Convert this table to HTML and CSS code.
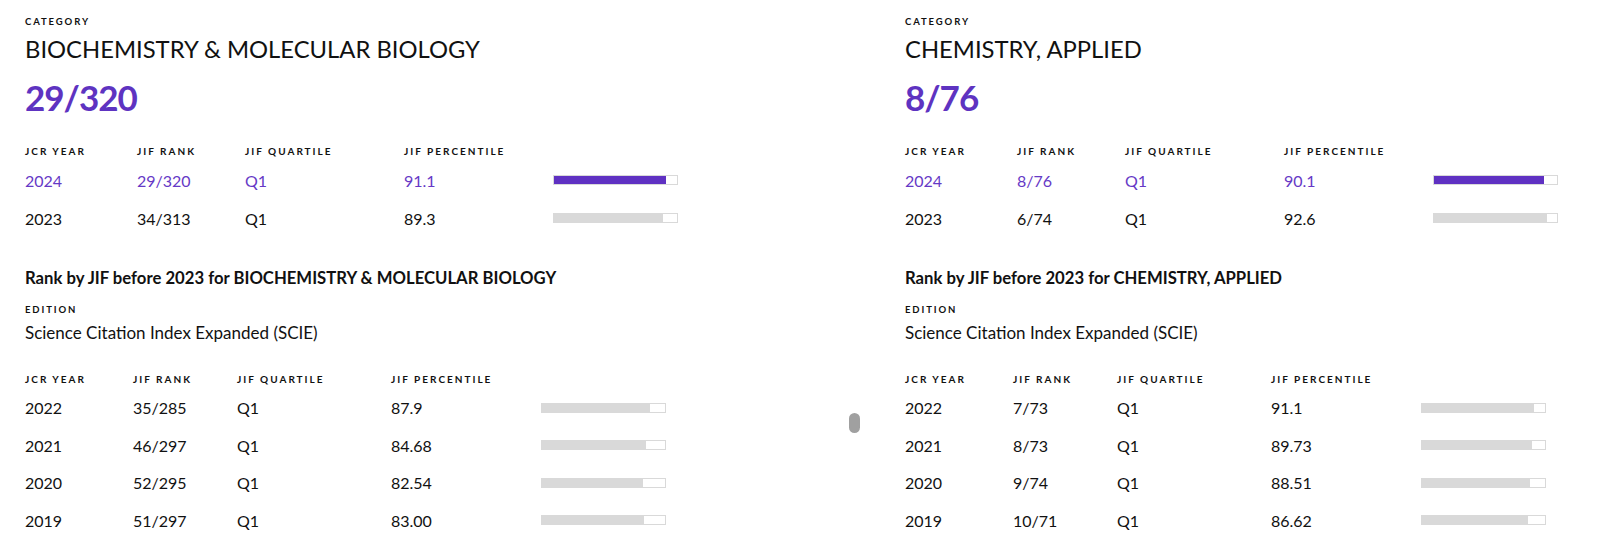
FILE: index.html
```html
<!DOCTYPE html>
<html lang="en">
<head>
<meta charset="utf-8">
<title>JCR Category Ranks</title>
<link rel="stylesheet" href="styles.css">
</head>
<body>
<div class="page">
  <section class="col">
    <div class="label">CATEGORY</div>
    <h2 class="cat-title">BIOCHEMISTRY &amp; MOLECULAR BIOLOGY</h2>
    <div class="rank-big">29/320</div>
    <div class="tbl tbl-top">
      <div class="th">JCR YEAR</div><div class="th">JIF RANK</div><div class="th">JIF QUARTILE</div><div class="th">JIF PERCENTILE</div><div class="th"></div>
      <div class="td hl">2024</div><div class="td hl">29/320</div><div class="td hl">Q1</div><div class="td hl">91.1</div><div class="td"><div class="bar"><div class="fill fill-hl" style="width:91.1%"></div></div></div>
      <div class="td">2023</div><div class="td">34/313</div><div class="td">Q1</div><div class="td">89.3</div><div class="td"><div class="bar"><div class="fill" style="width:89.3%"></div></div></div>
    </div>
    <h3 class="sub-title">Rank by JIF before 2023 for BIOCHEMISTRY &amp; MOLECULAR BIOLOGY</h3>
    <div class="label label-ed">EDITION</div>
    <div class="edition">Science Citation Index Expanded (SCIE)</div>
    <div class="tbl tbl-bottom">
      <div class="th">JCR YEAR</div><div class="th">JIF RANK</div><div class="th">JIF QUARTILE</div><div class="th">JIF PERCENTILE</div><div class="th"></div>
      <div class="td">2022</div><div class="td">35/285</div><div class="td">Q1</div><div class="td">87.9</div><div class="td"><div class="bar"><div class="fill" style="width:87.9%"></div></div></div>
      <div class="td">2021</div><div class="td">46/297</div><div class="td">Q1</div><div class="td">84.68</div><div class="td"><div class="bar"><div class="fill" style="width:84.68%"></div></div></div>
      <div class="td">2020</div><div class="td">52/295</div><div class="td">Q1</div><div class="td">82.54</div><div class="td"><div class="bar"><div class="fill" style="width:82.54%"></div></div></div>
      <div class="td">2019</div><div class="td">51/297</div><div class="td">Q1</div><div class="td">83.00</div><div class="td"><div class="bar"><div class="fill" style="width:83%"></div></div></div>
    </div>
    <div class="scroll-thumb"></div>
  </section>
  <section class="col">
    <div class="label">CATEGORY</div>
    <h2 class="cat-title">CHEMISTRY, APPLIED</h2>
    <div class="rank-big">8/76</div>
    <div class="tbl tbl-top">
      <div class="th">JCR YEAR</div><div class="th">JIF RANK</div><div class="th">JIF QUARTILE</div><div class="th">JIF PERCENTILE</div><div class="th"></div>
      <div class="td hl">2024</div><div class="td hl">8/76</div><div class="td hl">Q1</div><div class="td hl">90.1</div><div class="td"><div class="bar"><div class="fill fill-hl" style="width:90.1%"></div></div></div>
      <div class="td">2023</div><div class="td">6/74</div><div class="td">Q1</div><div class="td">92.6</div><div class="td"><div class="bar"><div class="fill" style="width:92.6%"></div></div></div>
    </div>
    <h3 class="sub-title">Rank by JIF before 2023 for CHEMISTRY, APPLIED</h3>
    <div class="label label-ed">EDITION</div>
    <div class="edition">Science Citation Index Expanded (SCIE)</div>
    <div class="tbl tbl-bottom">
      <div class="th">JCR YEAR</div><div class="th">JIF RANK</div><div class="th">JIF QUARTILE</div><div class="th">JIF PERCENTILE</div><div class="th"></div>
      <div class="td">2022</div><div class="td">7/73</div><div class="td">Q1</div><div class="td">91.1</div><div class="td"><div class="bar"><div class="fill" style="width:91.1%"></div></div></div>
      <div class="td">2021</div><div class="td">8/73</div><div class="td">Q1</div><div class="td">89.73</div><div class="td"><div class="bar"><div class="fill" style="width:89.73%"></div></div></div>
      <div class="td">2020</div><div class="td">9/74</div><div class="td">Q1</div><div class="td">88.51</div><div class="td"><div class="bar"><div class="fill" style="width:88.51%"></div></div></div>
      <div class="td">2019</div><div class="td">10/71</div><div class="td">Q1</div><div class="td">86.62</div><div class="td"><div class="bar"><div class="fill" style="width:86.62%"></div></div></div>
    </div>
  </section>
</div>
</body>
</html>
```
FILE: styles.css
```css
html, body {
  margin: 0;
  padding: 0;
  background: #ffffff;
}
body {
  width: 1599px;
  height: 555px;
  overflow: hidden;
  font-family: "Lato", "Liberation Sans", sans-serif;
  color: #111111;
}
.page {
  display: grid;
  grid-template-columns: 880px 719px;
  width: 1599px;
  overflow: hidden;
}
.col {
  position: relative;
  padding: 15.7px 0 0 25px;
  height: 555px;
  box-sizing: border-box;
  min-width: 0;
}
.label {
  font-size: 9.5px;
  line-height: 11.4px;
  font-weight: 700;
  letter-spacing: 1.9px;
  color: #111111;
}
.cat-title {
  margin: 8.1px 0 0 0;
  font-size: 23.8px;
  line-height: 28.8px;
  font-weight: 400;
  color: #111111;
}
.rank-big {
  margin-top: 12.4px;
  font-size: 35px;
  line-height: 42px;
  font-weight: 700;
  letter-spacing: -1px;
  color: #5e33c1;
}
.tbl {
  display: grid;
  grid-template-rows: 20px;
  align-items: center;
}
.tbl-top {
  margin-top: 23px;
  grid-auto-rows: 38px;
  grid-template-columns: 112px 108px 159px 148.5px 125px;
}
.tbl-bottom {
  margin-top: 26.3px;
  grid-auto-rows: 37.5px;
  grid-template-columns: 108px 104px 154px 149.5px 125px;
}
.th {
  font-size: 10px;
  line-height: 20px;
  font-weight: 700;
  letter-spacing: 2px;
  color: #111111;
  white-space: nowrap;
}
.td {
  font-size: 16px;
  line-height: 1.2;
  color: #111111;
  white-space: nowrap;
}
.td.hl {
  color: #6639c6;
}
.bar {
  width: 125px;
  height: 10px;
  box-sizing: border-box;
  border: 1px solid #d9d9d9;
  background: #ffffff;
}
.fill {
  height: 100%;
  background: #d9d9d9;
}
.fill-hl {
  background: #5f31c2;
}
.sub-title {
  margin: 30.8px 0 0 0;
  font-size: 16.7px;
  line-height: 20.2px;
  font-weight: 700;
  color: #111111;
}
.label-ed {
  margin-top: 16px;
}
.edition {
  margin-top: 6.1px;
  font-size: 17px;
  line-height: 21px;
  color: #111111;
}
.scroll-thumb {
  position: absolute;
  left: 849px;
  top: 413px;
  width: 11px;
  height: 20px;
  border-radius: 6px;
  background: #a0a0a0;
}
```
